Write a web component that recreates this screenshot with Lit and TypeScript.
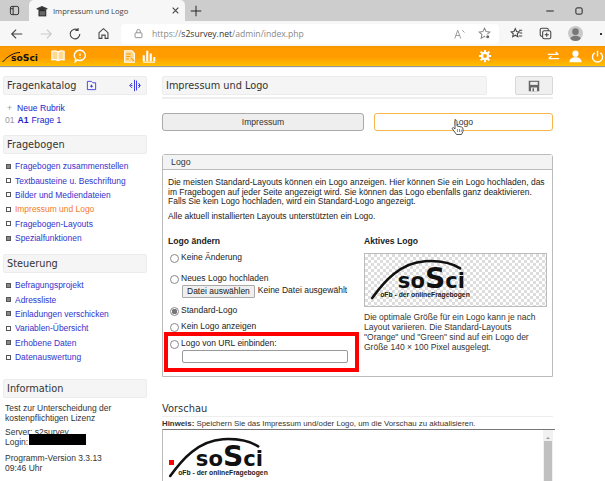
import { LitElement, html, css, svg } from "lit";
import { customElement } from "lit/decorators.js";

const sosci = () => html`<svg class="logo" width="112" height="52" viewBox="0 0 140 65">
  <path d="M9 55 C24 34 44 11 75 9 C94 8 108 11 119 18" fill="none" stroke="#111" stroke-width="3.2" stroke-linecap="round"/>
  <text x="41" y="43" font-family="'DejaVu Sans',sans-serif" font-weight="700" font-size="27" fill="#111" textLength="84" lengthAdjust="spacingAndGlyphs">so<tspan font-size="36">S</tspan>ci</text>
  <text x="19" y="54" font-family="'Liberation Sans',sans-serif" font-weight="700" font-size="8.5" fill="#222" textLength="112" lengthAdjust="spacingAndGlyphs">oFb - der onlineFragebogen</text>
</svg>`;

const ic = (w: number, body: unknown, cls = "") => html`<svg class=${cls} width=${w} height=${w} viewBox="0 0 16 16" fill="none" stroke="currentColor" stroke-width="1.3">${body}</svg>`;

@customElement("app-root")
export class AppRoot extends LitElement {
  static styles = css`
    :host { display: block; position: relative; width: 605px; height: 481px; overflow: hidden; background: #fff; font-family: "Liberation Sans", Arial, sans-serif; font-size: 8.5px; color: #222; }
    svg { display: block; flex: none; }
    .tabs { height: 21px; background: #cdcdcd; display: flex; align-items: center; color: #222; }
    .tabicon { width: 29px; display: flex; justify-content: center; }
    .tab { width: 156px; height: 21px; box-sizing: border-box; background: #f7f7f7; border-radius: 5px 5px 0 0; display: flex; align-items: center; padding: 0 5px 0 7px; gap: 5px; font: 7.6px "Open Sans", sans-serif; color: #444; }
    .tab span { flex: 1; }
    .plus { margin-left: 5px; }
    .winctl { margin-left: auto; display: flex; gap: 19px; padding-right: 21px; }
    .toolbar { height: 25px; background: #f7f7f7; display: flex; align-items: center; color: #444; padding-left: 10px; box-sizing: border-box; }
    .toolbar .nav { display: flex; gap: 15px; width: 111px; }
    .nav .off { color: #c9c9c9; }
    .addr { width: 378px; height: 20px; background: #fff; border-radius: 4px; display: flex; align-items: center; padding: 0 8px 0 12px; box-sizing: border-box; gap: 8px; font: 8.6px "Open Sans", sans-serif; color: #888; }
    .addr b { font-weight: 400; color: #333; }
    .addr .url { flex: 1; }
    .addr .aa { margin-right: 4px; }
    .tools { display: flex; align-items: center; gap: 16px; margin-left: 11px; }
    .avatar { width: 15px; height: 15px; border-radius: 50%; background: #c9c9c9; display: flex; align-items: center; justify-content: center; color: #777; overflow: hidden; }
    .dots { width: 2px; height: 2px; background: #333; margin-left: 1px; }
    .bar { height: 20px; background: linear-gradient(#f29400 0, #ff9c00 12%, #ff9c00 55%, #ffc000 100%); box-shadow: 0 1px 1px #999; display: flex; align-items: center; color: #fff; padding-left: 2px; }
    .bar .brand { width: 48px; }
    .bar .sp1 { margin-right: 8px; margin-left: 1px; }
    .bar .gear { margin-left: auto; margin-right: 55px; }
    .bar .last { margin-right: 0; }
    .bar .rt { display: flex; gap: 9px; margin-right: 1px; }
    .bar .sp2 { margin-left: 36px; margin-right: 6px; }
    .page { display: grid; grid-template-columns: 144px 391px; column-gap: 15px; padding: 10px 0 0 3px; }
    .side { display: flex; flex-direction: column; }
    .hd { height: 19px; box-sizing: border-box; background: #f5f5f5; border: 1px solid #ececec; border-radius: 2px; display: flex; align-items: center; padding: 0 3px 0 3px; font: 9.75px "DejaVu Sans", sans-serif; color: #333; }
    .hd .i1 { margin-left: 10px; color: #3a3adf; }
    .hd .i2 { margin-left: auto; margin-right: 2px; color: #3a3adf; }
    .cat { padding: 7px 0 0 2px; line-height: 12px; font-size: 8.6px; color: #22c; height: 33px; }
    .cat div { display: flex; gap: 3px; }
    .cat .g { color: #999; }
    .cat .plusg { width: 9px; text-align: center; color: #999; }
    .mini { padding: 5px 0 0 3px; height: 89px; margin-bottom: 6px; font-size: 8.45px; }
    .mini.m2 { margin-bottom: 12px; }
    .mini div { height: 14.4px; display: flex; align-items: center; gap: 4px; color: #33c; }
    .mini div.cur { color: #f57a1f; }
    .box { width: 3px; height: 3px; border: 1px solid #555; background: #fff; flex: none; }
    .box.f { background: #888; }
    .info { padding: 5px 0 0 2px; line-height: 10px; color: #333; }
    .info p { margin: 0 0 6px; }
    .info p:first-child { margin-bottom: 4px; }
    .login { display: flex; }
    .redact { width: 57px; height: 11px; background: #000; margin-left: 1px; margin-top: -3px; }
    .titlerow { display: flex; justify-content: space-between; }
    .titlerow .hd { width: 325px; }
    .save { width: 38px; height: 19px; box-sizing: border-box; background: #f0f0f0; border: 1px solid #d8d8d8; border-radius: 2px; display: flex; align-items: center; justify-content: center; color: #666; }
    .rule { height: 2px; background: #eee; margin-top: 2px; }
    .btns { display: flex; gap: 10px; margin-top: 14px; }
    .btn { height: 18px; box-sizing: border-box; border-radius: 3px; display: flex; align-items: center; justify-content: center; color: #333; font-size: 8.6px; }
    .btn.a { width: 202px; background: #eee; border: 1px solid #aaa; }
    .btn.b { width: 179px; background: #fff; border: 1px solid #f7b64a; }
    .panel { margin-top: 23px; height: 223px; box-sizing: border-box; border: 1px solid #bbb; border-radius: 3px 3px 0 0; }
    .panel h3 { margin: 0; height: 14px; border-bottom: 1px solid #bbb; background: #f3f3f3; font: 400 8.8px/14px "Liberation Sans", sans-serif; padding-left: 8px; color: #333; }
    .body { padding: 8px 5px 0 5px; line-height: 9.7px; color: #222; white-space: nowrap; }
    .body p { margin: 0 0 5px; }
    .cols { display: grid; grid-template-columns: 196px 183px; margin-top: 14px; }
    .cols h4 { margin: 0 0 7px; font: 700 8.6px/10px "Liberation Sans", sans-serif; }
    .opt { display: flex; align-items: center; gap: 1px; height: 11px; margin-left: 2px; }
    .radio { width: 9px; height: 9px; border-radius: 50%; border: 1px solid #888; box-sizing: border-box; background: #fff; margin-right: 1px; flex: none; }
    .radio.on { background: radial-gradient(circle, #777 0 2.6px, #fff 3px); }
    .opt.o1 { margin-top: 2px; }
    .opt.o2 { margin-top: 10px; }
    .opt.o3 { margin-top: 5px; }
    .opt.o4 { margin-top: 6px; }
    .file { display: flex; align-items: center; gap: 3px; margin: 0 0 8px 14px; height: 13px; }
    .file span.fb { border: 1px solid #aaa; background: #efefef; padding: 0 4px; line-height: 11.5px; color: #222; border-radius: 1px; }
    .field { margin: 0 0 0 14px; width: 166px; height: 13px; box-sizing: border-box; border: 1px solid #999; border-radius: 2px; background: #fff; }
    .check { height: 54px; box-sizing: border-box; border: 1px solid #bbb; background-color: #fff; background-image: linear-gradient(45deg, #ddd 25%, transparent 25%, transparent 75%, #ddd 75%), linear-gradient(45deg, #ddd 25%, transparent 25%, transparent 75%, #ddd 75%); background-size: 6px 6px; background-position: 0 0, 3px 3px; }
    .body .note { margin: 5px 0 0; line-height: 10px; color: #333; }
    .prev { margin-top: 25px; }
    .prev h2 { margin: 0; font: 400 9.9px/13px "DejaVu Sans", sans-serif; color: #333; }
    .prev .line { height: 1px; background: #eee; margin-top: 1px; }
    .prev .hint { font-size: 7.85px; line-height: 10px; margin-top: 2px; color: #333; }
    .frame { border-top: 1px solid #777; border-left: 1px solid #bbb; height: 60px; margin-right: -2px; display: flex; justify-content: space-between; position: relative; }
    .frame svg.logo { margin: 2px 0 0 0; }
    .dot { position: absolute; left: 6px; top: 30px; width: 5px; height: 5px; background: #f00; }
    .sb { width: 10px; background: #f1f1f1; position: relative; margin-right: 2px; }
    .sb::before { content: ""; position: absolute; left: 1px; right: 1px; top: 11px; bottom: 0; background: #c0c0c0; }
    .sb::after { content: ""; position: absolute; left: 3px; top: 5px; border: 2px solid transparent; border-bottom-color: #999; }
    .red { position: absolute; left: 164px; top: 332px; width: 195px; height: 40px; box-sizing: border-box; border: 4px solid #f00; }
    .cursor { position: absolute; left: 451px; top: 118px; }
  `;

  render() {
    const list1 = [["Fragebogen zusammenstellen",1],["Textbausteine u. Beschriftung",0],["Bilder und Mediendateien",0],["Impressum und Logo",0,1],["Fragebogen-Layouts",0],["Spezialfunktionen",1]];
    const list2 = [["Befragungsprojekt",1],["Adressliste",1],["Einladungen verschicken",1],["Variablen-Übersicht",0],["Erhobene Daten",1],["Datenauswertung",0]];
    const li = (x: any[]) => html`<div class=${x[2] ? "cur" : ""}><i class="box ${x[1] ? "f" : ""}"></i>${x[0]}</div>`;
    return html`
      <div class="tabs">
        <div class="tabicon">${ic(11, svg`<rect x="2" y="2" width="12" height="12" rx="2.5"/><path d="M6 2v12M2 5.5h4" />`)}</div>
        <div class="tab">
          ${ic(12, svg`<path d="M1 5l7-3 7 3-7 3z" fill="#333"/><rect x="4" y="7.5" width="9" height="7" fill="#666" stroke="#222"/>`)}
          <span>Impressum und Logo</span>
          ${ic(9, svg`<path d="M3 3l10 10M13 3L3 13" stroke-width="2"/>`)}
        </div>
        ${ic(12, svg`<path d="M8 1v14M1 8h14"/>`, "plus")}
        <div class="winctl">
          ${ic(10, svg`<path d="M2 8h12" stroke-width="1.6"/>`)}
          ${ic(10, svg`<rect x="3" y="3" width="10" height="10" rx="2" stroke-width="1.6"/>`)}
        </div>
      </div>
      <div class="toolbar">
        <div class="nav">
          ${ic(14, svg`<path d="M14 8H2M7 3L2 8l5 5"/>`)}
          ${ic(14, svg`<path d="M2 8h12M9 3l5 5-5 5"/>`, "off")}
          ${ic(14, svg`<path d="M13.5 8A5.5 5.5 0 1 1 11 3.4M11.5 1v3h-3"/>`)}
          ${ic(13, svg`<path d="M2.5 7L8 2l5.5 5v7H10V10H6v4H2.5z"/>`)}
        </div>
        <div class="addr">
          ${ic(11, svg`<rect x="3" y="7" width="10" height="7" rx="1"/><path d="M5.5 7V4.5a2.5 2.5 0 0 1 5 0V7"/>`)}
          <span class="url">https://<b>s2survey.net</b>/admin/index.php</span>
          ${ic(12, svg`<path d="M1 14L5 3l4 11M2.5 10h5M11 3l3 3" stroke="#999"/>`, "aa")}
          ${ic(13, svg`<path d="M8 1.5l2 4.2 4.5.5-3.3 3 .9 4.5L8 11.5 3.900 13.700l.9-4.500-3.300-3 4.500-.5z"/><circle cx="12" cy="12" r="2.500" fill="#666" stroke="#fff"/>`)}
        </div>
        <div class="tools">
          ${ic(13, svg`<path d="M6.500 2l1.600 3.600 3.400.4-2.500 2.300.7 3.700-3.200-1.900-3.200 1.900.7-3.700L1.500 6l3.400-.4zM11 4h4M12 7.500h3M11 11h4"/>`)}
          ${ic(13, svg`<rect x="1.500" y="1.500" width="10" height="10" rx="2"/><rect x="4.500" y="4.500" width="10" height="10" rx="2" fill="#f7f7f7"/><path d="M9.500 7v5M7 9.500h5"/>`)}
          <div class="avatar">${html`<svg width="15" height="15" viewBox="0 0 16 16" fill="currentColor"><circle cx="8" cy="6" r="3.500"/><ellipse cx="8" cy="15" rx="6" ry="4.500"/></svg>`}</div>
          <i class="dots"></i>
        </div>
      </div>
      <div class="bar">
        <div class="brand">
          <svg width="36" height="14" viewBox="0 0 36 14">
            <path d="M0.500 13C6 7 12 3.500 18 3.500" fill="none" stroke="#111" stroke-width="1"/>
            <text x="9" y="12" font-family="'DejaVu Sans',sans-serif" font-weight="700" font-size="8.500" fill="#111" textLength="27" lengthAdjust="spacingAndGlyphs">soSci</text>
          </svg>
        </div>
        ${ic(14, svg`<path d="M8 3.500C6 2 3 2 1 2.500v10c2-.5 5-.5 7 1 2-1.500 5-1.500 7-1v-10c-2-.5-5-.5-7 1zM8 3.500v10" fill="#ffd990" stroke="#fff"/>`, "sp1")}
        ${ic(14, svg`<path d="M8 1.500a6.300 5.800 0 1 1-3 11L2.500 14.500 3 11A6.300 5.800 0 0 1 8 1.500z" stroke-width="1.600"/><path d="M8 5v3M8 9.500v1.200" />`)}
        ${ic(13, svg`<path d="M2 1h9l3 3v11H2z" fill="#ffd990" stroke="#fff"/><path d="M4 5h6M4 8h5M4 11h3M10 10l4 4" stroke="#ff9c00"/>`, "sp2")}
        ${ic(14, svg`<path d="M2 14V7M6 14V2M10 14V5M14 14V9" stroke-width="2.400" stroke="#fff"/><path d="M1 15h14"/>`)}
        ${ic(14, svg`<circle cx="8" cy="8" r="3.500" stroke-width="2.600"/><path d="M8 1v3M8 12v3M1 8h3M12 8h3M3 3l2.200 2.200M10.800 10.800L13 13M13 3l-2.200 2.200M5.200 10.800L3 13" stroke-width="2.200"/>`, "gear")}
        <div class="rt">
          ${ic(13, svg`<path d="M1 5.500h13M10.500 2.500l3.500 3M15 10.500H2M5.500 7.500L2 10.500" stroke-width="1.500"/>`)}
          <svg width="13" height="13" viewBox="0 0 16 16" fill="currentColor"><circle cx="8" cy="4.500" r="3.800"/><path d="M0.500 15c0-4 3-6 7.500-6s7.500 2 7.500 6z"/></svg>
          ${ic(13, svg`<path d="M4.500 3.500a6.200 6.200 0 1 0 7 0M8 1v7" stroke-width="1.700"/>`, "last")}
        </div>
      </div>
      <div class="page">
        <aside class="side">
          <div class="hd">Fragenkatalog
            ${ic(11, svg`<path d="M2 2h6l2 2h4v10H2z"/><path d="M8 7v4M6 9h4" stroke-width="1.500"/>`, "i1")}
            ${ic(13, svg`<path d="M8 1v14M10.500 2v12M5 5L2 8l3 3M13 5l2 3-2 3M5.500 8H3M12.500 8H15" stroke-width="1.200"/>`, "i2")}
          </div>
          <div class="cat">
            <div><span class="plusg">+</span> Neue Rubrik</div>
            <div><span class="g">01</span><b>A1</b> Frage 1</div>
          </div>
          <div class="hd">Fragebogen</div>
          <div class="mini">${list1.map(li)}</div>
          <div class="hd">Steuerung</div>
          <div class="mini m2">${list2.map(li)}</div>
          <div class="hd">Information</div>
          <div class="info">
            <p>Test zur Unterscheidung der<br />kostenpflichtigen Lizenz</p>
            <p>Server: s2survey<br /><span class="login">Login: <i class="redact"></i></span></p>
            <p>Programm-Version 3.3.13<br />09:46 Uhr</p>
          </div>
        </aside>
        <main>
          <div class="titlerow">
            <div class="hd">Impressum und Logo</div>
            <div class="save">${html`<svg width="12" height="12" viewBox="0 0 16 16"><path d="M1 1h14v14H1z" fill="#666"/><rect x="3" y="2.500" width="10" height="4" fill="#eee"/><rect x="4" y="10" width="8" height="5" fill="#eee"/><rect x="6" y="11" width="2" height="4" fill="#666"/></svg>`}</div>
          </div>
          <div class="rule"></div>
          <div class="btns">
            <div class="btn a">Impressum</div>
            <div class="btn b">Logo</div>
          </div>
          <section class="panel">
            <h3>Logo</h3>
            <div class="body">
              <p>Die meisten Standard-Layouts können ein Logo anzeigen. Hier können Sie ein Logo hochladen, das<br />im Fragebogen auf jeder Seite angezeigt wird. Sie können das Logo ebenfalls ganz deaktivieren.<br />Falls Sie kein Logo hochladen, wird ein Standard-Logo angezeigt.</p>
              <p>Alle aktuell installierten Layouts unterstützten ein Logo.</p>
              <div class="cols">
                <div>
                  <h4>Logo ändern</h4>
                  <div class="opt o1"><i class="radio"></i>Keine Änderung</div>
                  <div class="opt o2"><i class="radio"></i>Neues Logo hochladen</div>
                  <div class="file"><span class="fb">Datei auswählen</span> Keine Datei ausgewählt</div>
                  <div class="opt"><i class="radio on"></i>Standard-Logo</div>
                  <div class="opt o3"><i class="radio"></i>Kein Logo anzeigen</div>
                  <div class="opt o4"><i class="radio"></i>Logo von URL einbinden:</div>
                  <div class="field"></div>
                </div>
                <div>
                  <h4>Aktives Logo</h4>
                  <div class="check">${sosci()}</div>
                  <p class="note">Die optimale Größe für ein Logo kann je nach<br />Layout variieren. Die Standard-Layouts<br />"Orange" und "Green" sind auf ein Logo der<br />Größe 140 × 100 Pixel ausgelegt.</p>
                </div>
              </div>
            </div>
          </section>
          <section class="prev">
            <h2>Vorschau</h2>
            <div class="line"></div>
            <div class="hint"><b>Hinweis:</b> Speichern Sie das Impressum und/oder Logo, um die Vorschau zu aktualisieren.</div>
            <div class="frame">
              ${sosci()}
              <i class="dot"></i>
              <div class="sb"></div>
            </div>
          </section>
        </main>
      </div>
      <div class="red"></div>
      <svg class="cursor" width="13" height="18" viewBox="0 0 13 16"><path d="M4 1.500c1-.8 2 0 2 1V7l4.500 1c1 .3 1.500 1 1.500 2v2.500L10.500 15.500h-5L1.500 10c-.7-1 .5-2 1.500-1l1 1z" fill="#fff" stroke="#444" stroke-width="0.900"/><path d="M6.500 10v3M8.500 10v3M10.300 10.500V13" stroke="#444" stroke-width="0.600"/></svg>
    `;
  }
}
